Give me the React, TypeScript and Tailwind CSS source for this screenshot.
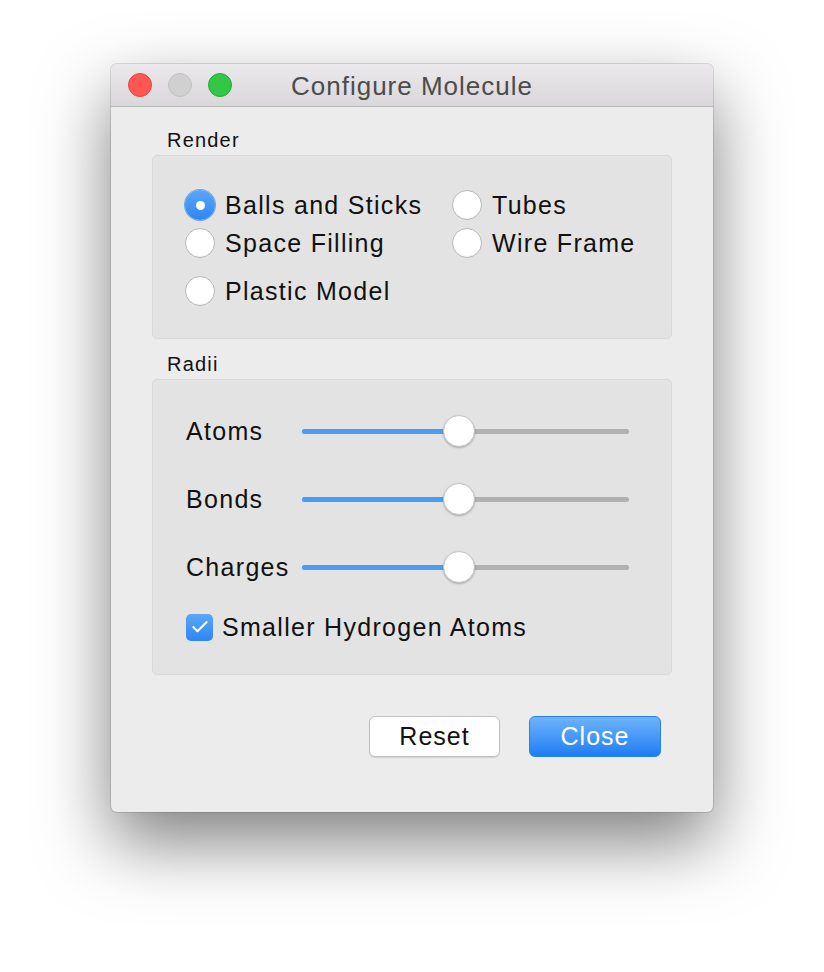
import { Check } from 'lucide-react';

const font = { fontFamily: '"Liberation Sans", Arial, sans-serif' };

function Radio({ label, checked = false }: { label: string; checked?: boolean }) {
    return (
        <div className="flex items-center h-[38px]">
            {checked ? (
                <span className="w-[30px] h-[30px] rounded-full bg-gradient-to-b from-[#5aa7f8] to-[#2d86f3] flex items-center justify-center shadow-[0_0_0_1px_rgba(40,120,230,0.6)]">
                    <span className="w-[9px] h-[9px] rounded-full bg-white" />
                </span>
            ) : (
                <span className="w-[30px] h-[30px] rounded-full bg-white border border-[#b8b8b8] shadow-[inset_0_-1px_1px_rgba(0,0,0,0.06)]" />
            )}
            <span className="ml-[10px] pt-[2px] text-[25px] tracking-[1.3px] text-[#111]">{label}</span>
        </div>
    );
}

function Slider({ label, value }: { label: string; value: number }) {
    return (
        <div className="flex items-center h-[40px]">
            <span className="w-[116px] pt-[2px] text-[25px] tracking-[1.3px] text-[#111]">{label}</span>
            <div className="relative w-[327px] h-[40px] flex items-center">
                <div className="w-full h-[5px] rounded-full bg-[#b1b1b1]" />
                <div
                    className="absolute left-0 h-[5px] rounded-full bg-[#4a9cf4]"
                    style={{ width: `${value}%` }}
                />
                <div
                    className="absolute w-[32px] h-[32px] rounded-full bg-white border border-[#c4c4c4] shadow-[0_1px_2px_rgba(0,0,0,0.25)]"
                    style={{ left: `calc(${value}% - 16px)` }}
                />
            </div>
        </div>
    );
}

export default function App() {
    return (
        <div className="min-h-screen bg-white pt-[64px] pl-[111px]" style={font}>
            <div className="w-[602px] h-[748px] rounded-[6px] bg-[#ececec] flex flex-col overflow-hidden shadow-[0_0_0_1px_rgba(0,0,0,0.12),0_30px_70px_rgba(0,0,0,0.5)]">
                {/* Title bar */}
                <div className="relative h-[43px] shrink-0 bg-gradient-to-b from-[#ebe9eb] to-[#d9d7d9] border-b border-[#b9b9b9] flex items-center">
                    <div className="flex items-center gap-[16px] pl-[17px]">
                        <span className="w-[24px] h-[24px] rounded-full bg-[#fc5753] border border-[#df4744]" />
                        <span className="w-[24px] h-[24px] rounded-full bg-[#d0d0d0] border border-[#c2c2c2]" />
                        <span className="w-[24px] h-[24px] rounded-full bg-[#33c748] border border-[#27aa35]" />
                    </div>
                    <div className="absolute inset-0 pt-[3px] flex items-center justify-center text-[26px] tracking-[1px] text-[#4c4c4c]">
                        Configure Molecule
                    </div>
                </div>

                {/* Content */}
                <div className="flex flex-col px-[41px] pt-[21px]">
                    <div className="h-[24px] leading-[24px] pl-[15px] text-[20px] tracking-[1.2px] text-[#111]">Render</div>
                    <div className="mt-[3px] h-[184px] rounded-[5px] bg-[#e3e3e3] border border-[#d8d8d8] pt-[30px] pl-[32px]">
                        <div className="grid grid-cols-[267px_1fr]">
                            <Radio label="Balls and Sticks" checked />
                            <Radio label="Tubes" />
                            <Radio label="Space Filling" />
                            <Radio label="Wire Frame" />
                        </div>
                        <div className="mt-[10px]">
                            <Radio label="Plastic Model" />
                        </div>
                    </div>

                    <div className="mt-[13px] h-[24px] leading-[24px] pl-[15px] text-[20px] tracking-[1.2px] text-[#111]">Radii</div>
                    <div className="mt-[3px] h-[296px] rounded-[5px] bg-[#e3e3e3] border border-[#d8d8d8] pt-[31px] pl-[33px] flex flex-col gap-[28px]">
                        <Slider label="Atoms" value={48} />
                        <Slider label="Bonds" value={48} />
                        <Slider label="Charges" value={48} />
                        <div className="flex items-center h-[40px] -mt-[8px]">
                            <span className="w-[27px] h-[27px] rounded-[5px] bg-gradient-to-b from-[#5aa7f8] to-[#2d86f3] flex items-center justify-center">
                                <Check className="w-[20px] h-[20px] text-white" strokeWidth={2.5} />
                            </span>
                            <span className="ml-[9px] pt-[2px] text-[25px] tracking-[1.3px] text-[#111]">Smaller Hydrogen Atoms</span>
                        </div>
                    </div>

                    <div className="mt-[41px] flex justify-end gap-[29px] pr-[11px]">
                        <button className="w-[131px] h-[41px] rounded-[6px] bg-white border border-[#c2c2c2] shadow-[0_1px_1px_rgba(0,0,0,0.12)] text-[25px] tracking-[1px] text-[#111]">
                            Reset
                        </button>
                        <button className="w-[132px] h-[41px] rounded-[6px] bg-gradient-to-b from-[#6db3fa] to-[#1b7cf4] border border-[#2a80ea] text-[25px] tracking-[1px] text-white">
                            Close
                        </button>
                    </div>
                </div>
            </div>
        </div>
    );
}
